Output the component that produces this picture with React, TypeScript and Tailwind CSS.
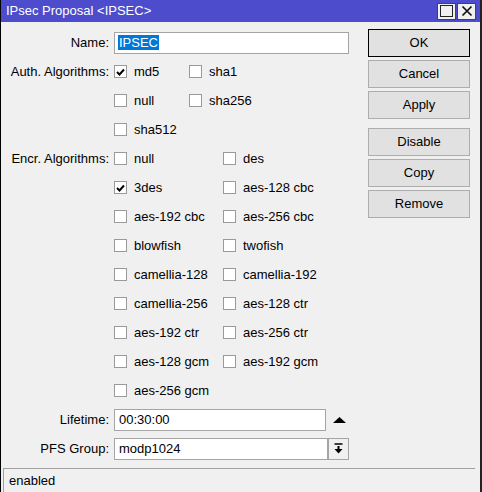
import React from "react";

const FONT = "font-['Liberation_Sans',Arial,sans-serif]";

type Box = { label: string; checked?: boolean };

const AUTH_ROWS: Box[][] = [
  [{ label: "md5", checked: true }, { label: "sha1" }],
  [{ label: "null" }, { label: "sha256" }],
  [{ label: "sha512" }],
];

const ENCR_ROWS: Box[][] = [
  [{ label: "null" }, { label: "des" }],
  [{ label: "3des", checked: true }, { label: "aes-128 cbc" }],
  [{ label: "aes-192 cbc" }, { label: "aes-256 cbc" }],
  [{ label: "blowfish" }, { label: "twofish" }],
  [{ label: "camellia-128" }, { label: "camellia-192" }],
  [{ label: "camellia-256" }, { label: "aes-128 ctr" }],
  [{ label: "aes-192 ctr" }, { label: "aes-256 ctr" }],
  [{ label: "aes-128 gcm" }, { label: "aes-192 gcm" }],
  [{ label: "aes-256 gcm" }],
];

function CheckBox({ label, checked }: Box) {
  return (
    <div className="flex items-center">
      <div className="flex h-[13px] w-[13px] items-center justify-center border border-[#9a9a9a] bg-white">
        {checked ? (
          <svg width="9" height="8" viewBox="0 0 9 8">
            <path d="M1 4 L3.5 6.5 L8 1.5" fill="none" stroke="#000" strokeWidth="1.9" />
          </svg>
        ) : null}
      </div>
      <span className="ml-[7px] whitespace-nowrap">{label}</span>
    </div>
  );
}

function Row({ label, children }: { label?: string; children: React.ReactNode }) {
  return (
    <div className="flex h-[29px] items-center">
      <div className="w-[113px] shrink-0 pr-[5px] text-right">{label}</div>
      {children}
    </div>
  );
}

function CheckRows({ label, rows, col }: { label: string; rows: Box[][]; col: string }) {
  return (
    <>
      {rows.map((row, i) => (
        <Row key={i} label={i === 0 ? label : undefined}>
          <div className={`flex h-full items-center ${col} shrink-0`}>
            <CheckBox {...row[0]} />
          </div>
          {row[1] ? <CheckBox {...row[1]} /> : null}
        </Row>
      ))}
    </>
  );
}

function Btn({ label, primary }: { label: string; primary?: boolean }) {
  return (
    <div
      className={`flex h-[28px] items-center justify-center border bg-[#e1e1e1] ${
        primary ? "border-[#000]" : "border-[#adadad]"
      }`}
    >
      {label}
    </div>
  );
}

export default function App() {
  return (
    <div
      className={`${FONT} flex h-[492px] w-[482px] flex-col overflow-hidden border-l border-r-2 border-l-black border-r-[#222] bg-[#f0f0f0] text-[13px] text-black`}
    >
      <div className="flex h-[22px] shrink-0 items-center bg-[#4c4ccc] pl-[5px] pr-[4px]">
        <span className="text-[13px] text-white">IPsec Proposal &lt;IPSEC&gt;</span>
        <div className="ml-auto flex gap-px">
          <div className="flex h-[17px] w-[19px] items-center justify-center border border-[#444] bg-[#f0f0f0]">
            <div className="h-[12px] w-[13px] border border-[#222]" />
          </div>
          <div className="flex h-[17px] w-[19px] items-center justify-center border border-[#444] bg-[#f0f0f0]">
            <svg width="12" height="12" viewBox="0 0 12 12">
              <path d="M1.5 1.5 L10.5 10.5 M10.5 1.5 L1.5 10.5" stroke="#111" strokeWidth="1.7" />
            </svg>
          </div>
        </div>
      </div>

      <div className="flex flex-1 pt-[6px]">
        <div className="w-[367px] shrink-0">
          <Row label="Name:">
            <div className="flex h-[22px] w-[235px] items-center border border-[#a5a5a5] bg-white pl-[3px]">
              <span className="bg-[#0078d7] px-px leading-[15px] text-white">IPSEC</span>
            </div>
          </Row>
          <CheckRows label="Auth. Algorithms:" rows={AUTH_ROWS} col="w-[75px]" />
          <CheckRows label="Encr. Algorithms:" rows={ENCR_ROWS} col="w-[109px]" />
          <Row label="Lifetime:">
            <div className="flex h-[22px] w-[212px] items-center border border-[#a5a5a5] bg-white pl-[4px]">
              00:30:00
            </div>
            <svg className="ml-[7px]" width="13" height="6" viewBox="0 0 13 6">
              <path d="M0 6 L6.5 0 L13 6 Z" fill="#000" />
            </svg>
          </Row>
          <Row label="PFS Group:">
            <div className="flex h-[22px] w-[214px] items-center border border-[#a5a5a5] bg-white pl-[4px]">
              modp1024
            </div>
            <div className="flex h-[22px] w-[21px] items-center justify-center border border-[#a5a5a5] bg-[#f0f0f0]">
              <svg width="9" height="11" viewBox="0 0 9 11">
                <path d="M0.5 1 H8.5" stroke="#000" strokeWidth="1.5" />
                <path d="M4.5 3 V7" stroke="#000" strokeWidth="2" />
                <path d="M0.5 6 H8.5 L4.5 10.5 Z" fill="#000" />
              </svg>
            </div>
          </Row>
        </div>

        <div className="flex w-[102px] flex-col gap-[3px] pt-px">
          <Btn label="OK" primary />
          <Btn label="Cancel" />
          <Btn label="Apply" />
          <div className="h-[3px]" />
          <Btn label="Disable" />
          <Btn label="Copy" />
          <Btn label="Remove" />
        </div>
      </div>

      <div className="mx-[2px] flex h-[24px] w-[472px] shrink-0 items-center border-l border-t border-[#a0a0a0] pl-[5px]">
        enabled
      </div>
    </div>
  );
}
